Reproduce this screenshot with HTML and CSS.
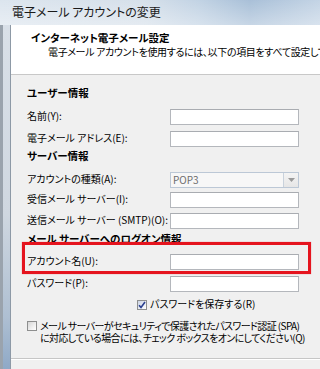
FILE: index.html
```html
<!DOCTYPE html>
<html>
<head>
  <meta charset="utf-8">
  <title>電子メール アカウントの変更</title>
  <link rel="stylesheet" href="styles.css">
</head>
<body>

  <div class="window">
    <div class="titlebar">
      <span class="title">電子メール アカウントの変更</span>
    </div>
    <div class="frame-left"></div>

    <div class="dialog">
      <!-- header panel -->
      <div class="header">
        <div class="header-title">インターネット電子メール設定</div>
        <div class="header-sub">電子メール アカウントを使用するには、以下の項目をすべて設定してください。</div>
      </div>

      <div class="content">
        <div class="section s-user">ユーザー情報</div>
        <div class="row r-name">
          <label>名前(Y):</label>
          <span class="input"></span>
        </div>
        <div class="row r-mail">
          <label>電子メール アドレス(E):</label>
          <span class="input"></span>
        </div>

        <div class="section s-server">サーバー情報</div>
        <div class="row r-type">
          <label>アカウントの種類(A):</label>
          <span class="combo">
            <span class="combo-text">POP3</span>
            <span class="combo-btn">
              <svg width="7" height="4" viewBox="0 0 7 4"><path d="M0 0h7L3.5 4z" fill="#9a9a9a"/></svg>
            </span>
          </span>
        </div>
        <div class="row r-in">
          <label>受信メール サーバー(I):</label>
          <span class="input"></span>
        </div>
        <div class="row r-out">
          <label>送信メール サーバー (SMTP)(O):</label>
          <span class="input"></span>
        </div>

        <div class="section s-logon">メール サーバーへのログオン情報</div>
        <div class="row r-account">
          <label>アカウント名(U):</label>
          <span class="input"></span>
          <!-- red annotation frame -->
          <span class="highlight"></span>
        </div>
        <div class="row r-pass">
          <label>パスワード(P):</label>
          <span class="input"></span>
        </div>

        <div class="check-row r-save">
          <span class="checkbox checked">
            <svg width="8" height="8" viewBox="0 0 8 8"><path d="M1 4.2l2 2.2L7 1" fill="none" stroke="#2a3f8f" stroke-width="1.6"/></svg>
          </span>
          <span>パスワードを保存する(R)</span>
        </div>

        <div class="check-row r-spa">
          <span class="checkbox"></span>
          <span class="spa-text">メール サーバーがセキュリティで保護されたパスワード認証 (SPA)<br>に対応している場合には、チェック ボックスをオンにしてください(Q)</span>
        </div>
      </div>

      <div class="footer"></div>
    </div>
  </div>

</body>
</html>
```

FILE: styles.css
```css
body {
  margin: 0;
  padding: 0;
  width: 320px;
  height: 369px;
  overflow: hidden;
  font-family: "Noto Sans CJK JP", "Noto Sans", sans-serif;
  font-feature-settings: "palt";
  font-size: 10px;
  color: #000;
  background: #b9c9da;
}

.window {
  display: grid;
  grid-template-columns: 10px 310px;
  grid-template-rows: 25px 344px;
  height: 369px;
  overflow: hidden;
}

.titlebar {
  grid-column: 1 / 3;
  background:
    linear-gradient(to bottom, rgba(255,255,255,0) 0%, rgba(255,255,255,0.35) 100%),
    linear-gradient(to right, #dce5ee 0%, #d6e0ea 45%, #c2d3e4 62%, #a9c0d8 78%, #c4d4e5 100%);
  display: flex;
  align-items: center;
  padding-left: 12px;
  padding-bottom: 1px;
  box-sizing: border-box;
}

.title {
  font-size: 12px;
  color: #1a1a1a;
  line-height: 14px;
}

.frame-left {
  background: linear-gradient(to bottom, #d9e0e8 0%, #cfd7e0 55%, #aebfd2 85%, #8fa9c7 100%);
  border-left: 3px solid #9aa3ad;
  box-sizing: border-box;
}

.dialog {
  background: #f0f0f0;
  border-left: 1px solid #8d99a6;
  display: flex;
  flex-direction: column;
  min-width: 0;
  overflow: hidden;
}

.header {
  height: 50px;
  background: #fff;
  border-bottom: 1px solid #c8c8c8;
  padding: 6px 0 0 20px;
  box-sizing: border-box;
  white-space: nowrap;
  overflow: hidden;
}

.header-title {
  font-weight: bold;
  font-size: 10.5px;
  line-height: 14px;
}

.header-sub {
  line-height: 14px;
  padding-left: 17px;
  letter-spacing: -0.35px;
}

.content {
  padding-left: 16px;
  flex: 1;
}

.section {
  font-weight: bold;
  font-size: 10.5px;
  line-height: 14px;
  height: 14px;
  white-space: nowrap;
}

.row {
  display: flex;
  align-items: flex-start;
  height: 16px;
  position: relative;
}

.row label {
  width: 143px;
  line-height: 14px;
  white-space: nowrap;
}

.input {
  width: 129px;
  height: 16px;
  box-sizing: border-box;
  background: #fff;
  border: 1px solid #b4b7bc;
  border-top-color: #a9acb1;
}

.combo {
  width: 129px;
  height: 16px;
  box-sizing: border-box;
  background: #f7f7f7;
  border: 1px solid #bcc8d6;
  display: flex;
}

.combo-text {
  flex: 1;
  color: #6d6d6d;
  line-height: 14px;
  padding-left: 2px;
}

.combo-btn {
  width: 14px;
  border-left: 1px solid #c9d2dc;
  background: linear-gradient(to bottom, #f4f4f4, #e6e6e6);
  display: flex;
  align-items: center;
  justify-content: center;
}

.highlight {
  position: absolute;
  left: -5px;
  top: -12px;
  width: 289px;
  height: 32px;
  box-sizing: border-box;
  border: 3px solid #e5141e;
  box-shadow: 0 0 1px rgba(229, 20, 30, 0.5);
}

.check-row {
  display: flex;
  align-items: flex-start;
  gap: 3px;
  white-space: nowrap;
}

.checkbox {
  width: 10px;
  height: 10px;
  box-sizing: border-box;
  border: 1px solid #8e8f8f;
  background: linear-gradient(135deg, #d6d6d6 0%, #f4f4f4 70%, #fff 100%);
  display: flex;
  align-items: center;
  justify-content: center;
  flex-shrink: 0;
}

.checkbox.checked {
  background: linear-gradient(135deg, #cbd3e4 0%, #eef2f8 70%, #fff 100%);
}

.r-save {
  line-height: 14px;
  padding-left: 110px;
}

.r-save .checkbox {
  margin-top: 3px;
}

.r-spa {
  line-height: 12px;
}

.r-spa .checkbox {
  margin-top: 1px;
}

.spa-text {
  letter-spacing: -0.6px;
}

.footer {
  height: 10px;
  border-top: 1px solid #c6c6c6;
  box-shadow: inset 0 1px 0 #fff;
}

/* vertical rhythm of the form */
.s-user { margin-top: 11px; }
.r-name { margin-top: 9px; }
.r-mail { margin-top: 6px; }
.s-server { margin-top: 2px; }
.r-type { margin-top: 9px; }
.r-in { margin-top: 4px; }
.r-out { margin-top: 5px; }
.s-logon { margin-top: 3px; }
.r-account { margin-top: 8px; }
.r-pass { margin-top: 6px; }
.r-save { margin-top: 5px; }
.r-spa { margin-top: 9px; }
```
